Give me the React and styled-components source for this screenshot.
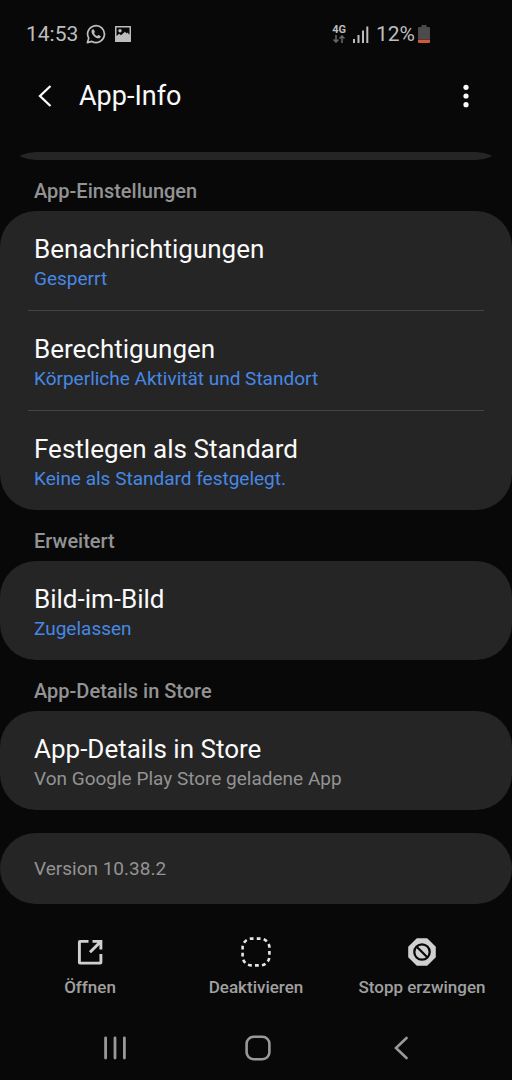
import React from "react";
import styled, { createGlobalStyle } from "styled-components";

const GlobalStyle = createGlobalStyle`
  * { box-sizing: border-box; }
  body {
    margin: 0;
    background: #080808;
    color: #fafafa;
    font-family: Roboto, "Liberation Sans", sans-serif;
  }
  button { font: inherit; color: inherit; background: none; border: 0; padding: 0; cursor: pointer; }
  h1, h2, p { margin: 0; }
  svg { display: block; }
`;

const Screen = styled.div`
  display: flex;
  flex-direction: column;
  min-height: 100vh;
`;

const StatusBar = styled.div`
  display: flex;
  justify-content: space-between;
  align-items: center;
  padding: 20px 82px 0 26px;
  color: #bdbdbd;
  font-size: 21px;
  line-height: 28px;
`;

const StatusGroup = styled.div`
  display: flex;
  align-items: center;
  gap: ${(p) => p.$gap}px;
`;

const Header = styled.header`
  display: flex;
  align-items: center;
  height: 96px;
  padding: 0 28px 0 27px;
`;

const IconButton = styled.button`
  display: flex;
  align-items: center;
  justify-content: center;
  width: 36px;
  height: 44px;
`;

const Title = styled.h1`
  flex: 1;
  padding-left: 16px;
  font-size: 27px;
  line-height: 32px;
  font-weight: 400;
`;

const Content = styled.main`
  flex: 1;
  margin-top: 8px;
  overflow: hidden;
  border-radius: 36px 36px 0 0;
`;

const Card = styled.div`
  overflow: hidden;
  border-radius: 36px;
  background: #252525;
`;

const ScrolledCard = styled(Card)`
  height: 72px;
  margin-top: -64px;
`;

const SectionLabel = styled.h2`
  padding: 19px 34px 8px;
  color: #939393;
  font-size: 20px;
  line-height: 24px;
  font-weight: 500;
`;

const Row = styled.button`
  display: block;
  width: 100%;
  height: 99px;
  padding: 4px 34px 0;
  text-align: left;
`;

const Divider = styled.hr`
  height: 1px;
  margin: 0 28px;
  border: 0;
  background: #444444;
`;

const RowTitle = styled.span`
  display: block;
  font-size: 26px;
  line-height: 32px;
`;

const RowValue = styled.span`
  display: block;
  color: ${(p) => (p.$muted ? "#939393" : "#4788e5")};
  font-size: 19px;
  line-height: 28px;
`;

const VersionCard = styled(Card)`
  margin-top: 23px;
  padding: 22px 34px;
  color: #939393;
  font-size: 19px;
  line-height: 27px;
`;

const Actions = styled.div`
  display: grid;
  grid-template-columns: repeat(3, 1fr);
  padding: 30px 7px 0;
`;

const Action = styled.button`
  display: flex;
  flex-direction: column;
  align-items: center;
  gap: 6px;
  color: #a0a0a0;
  font-size: 17px;
  line-height: 24px;
  font-weight: 500;
  white-space: nowrap;
`;

const NavBar = styled.nav`
  display: flex;
  justify-content: space-around;
  align-items: center;
  height: 65px;
  margin-top: 16px;
  padding: 0 40px 0 43px;
  color: #999999;
`;

const SETTINGS = [
  ["Benachrichtigungen", "Gesperrt"],
  ["Berechtigungen", "Körperliche Aktivität und Standort"],
  ["Festlegen als Standard", "Keine als Standard festgelegt."],
];

function SettingRow({ title, value, muted }) {
  return (
    <Row type="button">
      <RowTitle>{title}</RowTitle>
      <RowValue $muted={muted}>{value}</RowValue>
    </Row>
  );
}

const WhatsAppIcon = () => (
  <svg width="20" height="20" viewBox="0 0 20 20" fill="none">
    <path d="M1.4 18.6 2.7 14.2A8.4 8.4 0 1 1 5.9 17.4Z" stroke="currentColor" strokeWidth="1.7" strokeLinejoin="round" />
    <path d="M7 5.2c-.5 0-1.5.8-1.5 2.2 0 2.900 3.900 6.900 6.900 6.900 1.400 0 2.300-.9 2.300-1.900 0-.4-1.900-1.400-2.400-1.400-.4 0-.8 1.100-1.200 1.100-.8 0-3-2-3-2.900 0-.4.8-.8.8-1.200 0-.5-.9-2.800-1.900-2.800Z" fill="currentColor" />
  </svg>
);

const PictureIcon = () => (
  <svg width="18" height="18" viewBox="0 0 18 18">
    <path fillRule="evenodd" fill="currentColor" d="M1.500 1h15q.5 0 .5.5v15q0 .5-.5.5h-15q-.5 0-.5-.5v-15Q1 1 1.500 1ZM2.500 2.500V11l2.700-2.300 1.800 1.500 4-3.500 1.700 1.700.8-.8 2 2.200V2.500Z" />
    <circle cx="6" cy="5.700" r="1.700" fill="currentColor" />
  </svg>
);

const NetworkColumn = styled.span`
  display: flex;
  flex-direction: column;
  align-items: center;
  gap: 1px;
  font-size: 11px;
  line-height: 9px;
  font-weight: 700;
`;

const NetworkIcon = () => (
  <NetworkColumn>
    4G
    <svg width="12" height="8" viewBox="0 0 12 8" fill="none" stroke="#686868" strokeWidth="1.500">
      <path d="M3 0V7M.5 4.500 3 7 5.500 4.500M9 8V1M6.500 3.500 9 1l2.500 2.500" />
    </svg>
  </NetworkColumn>
);

const SignalIcon = () => (
  <svg width="16" height="17" viewBox="0 0 16 17" fill="currentColor">
    <rect x="0" y="13" width="2" height="4" />
    <rect x="4.500" y="9" width="2" height="8" />
    <rect x="9" y="4.500" width="2" height="12.500" />
    <rect x="13.300" y="0.500" width="2" height="16.500" />
  </svg>
);

const BatteryIcon = () => (
  <svg width="12" height="18" viewBox="0 0 12 18">
    <path d="M3.500 0h5v2H11q1 0 1 1v11H0V3q0-1 1-1h2.500Z" fill="#4b4b4b" />
    <path d="M0 14.500h12V17q0 1-1 1H1q-1 0-1-1Z" fill="#cb5b3c" />
  </svg>
);

const BackIcon = () => (
  <svg width="14" height="22" viewBox="0 0 14 22" fill="none" stroke="currentColor" strokeWidth="2.300">
    <path d="M12.500 1 2 11l10.500 10" />
  </svg>
);

const MoreIcon = () => (
  <svg width="6" height="24" viewBox="0 0 6 24" fill="currentColor">
    <circle cx="3" cy="3.300" r="2.600" />
    <circle cx="3" cy="12" r="2.600" />
    <circle cx="3" cy="20.700" r="2.600" />
  </svg>
);

const OpenIcon = () => (
  <svg width="28" height="35" viewBox="0 0 28 35" fill="none" stroke="#d0d0d0" strokeWidth="2.900">
    <path d="M12.500 7.400H4Q3.400 7.400 3.400 8V28.500Q3.400 29.100 4 29.100H24.300Q24.900 29.100 24.900 28.500V20" />
    <path d="M16.500 7.400H24.900V15.500M24.400 7.900 14 18.300" />
  </svg>
);

const DisableIcon = () => (
  <svg width="32" height="35" viewBox="0 0 32 35" fill="none" stroke="#e6e6e6" strokeWidth="2.600">
    <rect x="2.600" y="4.600" width="26.800" height="26.800" rx="9" pathLength="130" strokeDasharray="5.400 4.600" strokeDashoffset="2.700" />
  </svg>
);

const StopIcon = () => (
  <svg width="28" height="35" viewBox="0 0 28 35" fill="none">
    <path d="M8.800 4.200h10.400L27.800 12.800v10.400l-8.600 8.600H8.800L.2 23.200V12.800Z" fill="#d0d0d0" />
    <circle cx="14" cy="18" r="7.700" stroke="#080808" strokeWidth="2.300" />
    <path d="m8.700 12.700 10.600 10.600" stroke="#080808" strokeWidth="2.300" />
  </svg>
);

const RecentsIcon = () => (
  <svg width="24" height="24" viewBox="0 0 24 24" stroke="currentColor" strokeWidth="2.800" strokeLinecap="round">
    <path d="M2.600 2V22M12 2V22M21.400 2V22" />
  </svg>
);

const HomeIcon = () => (
  <svg width="26" height="26" viewBox="0 0 26 26" fill="none" stroke="currentColor" strokeWidth="2.600">
    <rect x="1.600" y="1.800" width="22.800" height="22.400" rx="7" />
  </svg>
);

const NavBackIcon = () => (
  <svg width="14" height="24" viewBox="0 0 14 24" fill="none" stroke="currentColor" strokeWidth="2.600" strokeLinecap="round">
    <path d="M12.500 2 2 12l10.500 10" />
  </svg>
);

export default function App() {
  return (
    <Screen>
      <GlobalStyle />
      <StatusBar>
        <StatusGroup $gap={8}>
          <span>14:53</span>
          <WhatsAppIcon />
          <PictureIcon />
        </StatusGroup>
        <StatusGroup $gap={7}>
          <NetworkIcon />
          <SignalIcon />
          <StatusGroup $gap={3}>
            <span>12%</span>
            <BatteryIcon />
          </StatusGroup>
        </StatusGroup>
      </StatusBar>
      <Header>
        <IconButton type="button" aria-label="Zurück"><BackIcon /></IconButton>
        <Title>App-Info</Title>
        <IconButton type="button" aria-label="Weitere Optionen"><MoreIcon /></IconButton>
      </Header>
      <Content>
        <ScrolledCard />
        <SectionLabel>App-Einstellungen</SectionLabel>
        <Card>
          {SETTINGS.map(([title, value], i) => (
            <React.Fragment key={title}>
              {i > 0 && <Divider />}
              <SettingRow title={title} value={value} />
            </React.Fragment>
          ))}
        </Card>
        <SectionLabel>Erweitert</SectionLabel>
        <Card>
          <SettingRow title="Bild-im-Bild" value="Zugelassen" />
        </Card>
        <SectionLabel>App-Details in Store</SectionLabel>
        <Card>
          <SettingRow title="App-Details in Store" value="Von Google Play Store geladene App" muted />
        </Card>
        <VersionCard>Version 10.38.2</VersionCard>
      </Content>
      <Actions>
        <Action type="button"><OpenIcon />Öffnen</Action>
        <Action type="button"><DisableIcon />Deaktivieren</Action>
        <Action type="button"><StopIcon />Stopp erzwingen</Action>
      </Actions>
      <NavBar>
        <IconButton type="button" aria-label="Letzte Apps"><RecentsIcon /></IconButton>
        <IconButton type="button" aria-label="Startbildschirm"><HomeIcon /></IconButton>
        <IconButton type="button" aria-label="Zurück"><NavBackIcon /></IconButton>
      </NavBar>
    </Screen>
  );
}
